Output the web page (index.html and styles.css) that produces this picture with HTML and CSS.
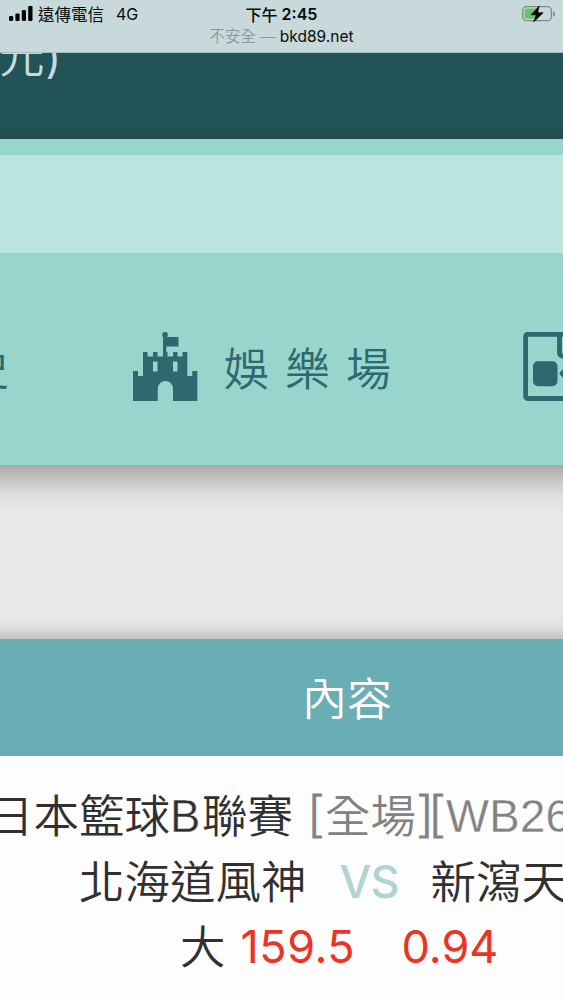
FILE: index.html
```html
<!DOCTYPE html>
<html lang="zh-Hant">
<head>
<meta charset="utf-8">
<title>bkd89.net</title>
<link rel="stylesheet" href="styles.css">
</head>
<body>
<header class="status">
  <div class="carrier">
    <svg class="signal" width="24" height="15" viewBox="0 0 24 15"><rect x="0" y="10" width="4.2" height="5" rx="1.2"/><rect x="6.4" y="7.4" width="4.2" height="7.6" rx="1.2"/><rect x="12.8" y="4" width="4.2" height="11" rx="1.2"/><rect x="19.2" y="0" width="4.3" height="15" rx="1.2"/></svg>
    <span class="name">遠傳電信</span><span class="net">4G</span>
  </div>
  <div class="middle">
    <div class="time"><span>下午</span><b>2:45</b></div>
    <div class="site"><span class="unsafe">不安全 —</span><span class="domain">bkd89.net</span></div>
  </div>
  <svg class="battery" width="36" height="18" viewBox="0 0 36 18"><rect x="1.6" y="1.700" width="28.8" height="14" rx="4" fill="none" stroke="#7f8b8d" stroke-width="1.3"/><path d="M5.5 3.500h11v10.300h-11q-2 0-2-2v-6.300q0-2 2-2Z" fill="#65c566"/><path d="M32 6q2 .8 2 3t-2 3Z" fill="#7f8b8d"/><path d="M18.200.9 10.200 9.800h5.200L12.600 17l9.600-9.300h-5.500Z" fill="#000" stroke="#000" stroke-width=".6"/></svg>
</header>
<div class="topbar"><span>元</span><span class="paren">)</span></div>
<nav class="menu">
  <div class="notice"></div>
  <div class="items">
    <span class="history">史</span>
    <svg class="castle" width="66" height="70" viewBox="0 0 66 70"><path d="M0 39h5v5h5V20h4.500v4.500H20V20h4.500v4.500H30V5.500h3.300V20H34.500v4.500H40V20h4.500v4.500H49.500V20H54.300V44H59.300V39H64.300V69H40V56.500a7.600 7.600 0 0 0-15.200 0V69H0ZM20 29.500V39.500H24.500V29.500ZM40 29.500V39.500H44.500V29.500Z" fill-rule="evenodd" fill="#2d696f"/><circle cx="32" cy="2.900" r="2.800" fill="#2d696f"/><path d="M33 5h12.500v9.500H33Z" fill="#2d696f"/></svg>
    <span class="casino">娛樂場</span>
    <svg class="card" width="70" height="70" viewBox="0 0 70 70"><path d="M70 2.300H4.600a2 2 0 0 0-2 2v60.200a2 2 0 0 0 2 2H70M36.500 2.300V21a3 3 0 0 0 3 3H70" fill="none" stroke="#2d696f" stroke-width="4.800"/><rect x="10" y="29.300" width="24.500" height="25" rx="5" fill="#2d696f"/><path d="M38 41.500 44 35v13Z" fill="#2d696f" stroke="#2d696f" stroke-width="3" stroke-linejoin="round"/></svg>
  </div>
</nav>
<div class="gap"></div>
<div class="thead">內容</div>
<main class="bet">
  <div class="row league"><span>日本籃球</span><span class="latin-b">B</span><span>聯賽</span><span class="tag"><i class="open">[</i><span>全場</span><i class="close">]</i><i class="open2">[</i><span class="code">WB26</span></span></div>
  <div class="row teams"><span>北海道風神</span><span class="vs">VS</span><span>新瀉天</span></div>
  <div class="row odds"><span>大</span><span class="line">159.5</span><span class="price">0.94</span></div>
</main>
</body>
</html>
```
FILE: styles.css
```css
* { box-sizing: border-box; }
body {
  margin: 0;
  width: 563px;
  height: 1000px;
  overflow: hidden;
  background: #fdfdfd;
  font-family: "Noto Sans CJK TC", sans-serif;
  font-weight: 350;
  white-space: nowrap;
}
.status {
  display: grid;
  grid-template-columns: 180px 203px 180px;
  height: 53px;
  background: #c7d9da;
  color: #080c0c;
  border-bottom: 1px solid #a9c0c1;
}
.carrier {
  display: flex;
  align-items: center;
  height: 28px;
  padding-left: 9px;
  font-size: 16.500px;
  font-weight: 400;
}
.signal { margin: 0 5px 1px 0; }
.net { margin-left: 12px; font-family: Inter, sans-serif; font-size: 16px; }
.middle { display: flex; flex-direction: column; align-items: center; }
.time { display: flex; height: 26px; line-height: 28px; gap: 4px; font-size: 16px; font-weight: 500; }
.time b { font: 600 16px/28px Inter, sans-serif; }
.site { display: flex; gap: 4px; font: 400 15.500px/22px Inter, "Noto Sans CJK TC", sans-serif; }
.unsafe { color: #8b9999; font-weight: 350; }
.battery { justify-self: end; margin: 5px 6px 0 0; }
.topbar {
  display: flex;
  height: 86px;
  overflow: hidden;
  background: linear-gradient(#225357 0 80%, #234b50);
  color: #c3dcdd;
  font-size: 45.500px;
  line-height: 60px;
}
.topbar span { margin: -30px 0 0 -1px; }
.topbar .paren { margin: -26px 0 0 1px; font-family: Inter, sans-serif; font-weight: 400; font-size: 43px; }
.menu {
  height: 326px;
  padding-top: 16px;
  background: #97d5cd;
}
.notice { height: 98px; background: #bbe4df; }
.items {
  display: flex;
  align-items: flex-start;
  height: 212px;
  padding-top: 79px;
  overflow: hidden;
  color: #2d696f;
  font-size: 45px;
  line-height: 69px;
}
.items > * { flex: none; }
.history { width: 45px; margin-left: -36px; }
.castle { margin-left: 124px; }
.casino { width: 300px; margin-left: 25px; letter-spacing: 16px; }
.card { margin-left: -1px; }
.gap {
  height: 174px;
  background: linear-gradient(#a9a8a7 0, #b6b5b4 7px, #d0cfce 20px, #e1e0df 32px, #e9e8e7 48px, #e9e8e7 150px, #e0dfdd 162px, #c6c3c2 174px);
}
.thead {
  height: 117px;
  padding-left: 302px;
  background: #68aeb4;
  color: #fff;
  font-size: 45px;
  line-height: 115px;
}
.bet { padding-top: 25px; color: #303030; font-size: 45.500px; }
.row { display: flex; height: 65.500px; line-height: 65.500px; }
.row > * { flex: none; }
.league { margin-left: -12px; }
.latin-b, .code { font-family: "Liberation Sans", sans-serif; line-height: 71px; }
.latin-b { width: 32px; -webkit-text-stroke: .4px #fdfdfd; }
.tag { display: flex; margin-left: 15px; color: #828282; }
.tag i { width: 17px; font-style: normal; line-height: 58px; -webkit-text-stroke: .8px #828282; }
.tag .close { width: 11px; margin-left: 2px; }
.tag .code { letter-spacing: .3px; -webkit-text-stroke: .3px #fdfdfd; }
.teams { padding-left: 79px; }
.vs { width: 124px; padding-left: 33px; color: #aed5d1; font: 500 45px/70px Inter, sans-serif; letter-spacing: -.8px; }
.odds { padding-left: 180px; }
.line, .price { color: #ea3424; font: 400 45px/70px Inter, sans-serif; }
.line { width: 161px; margin-left: 15px; letter-spacing: .5px; }
.price { letter-spacing: 0; }
```
